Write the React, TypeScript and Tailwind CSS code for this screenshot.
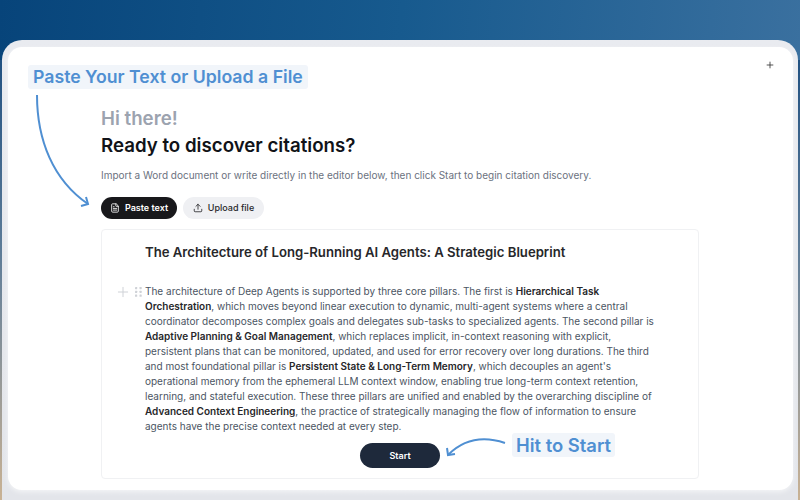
import { FileText, Plus, Upload } from "lucide-react";

function Note({ text, className }: { text: string; className: string }) {
  return (
    <div className={"absolute rounded-[3px] bg-[#f1f5fa] leading-6 font-semibold text-[#4f8fd2] " + className}>
      {text}
    </div>
  );
}

function DragDots() {
  return (
    <svg width="7" height="10" viewBox="0 0 7 10" className="fill-[#cfd2d7]">
      {[0, 4.5].map((x) =>
        [0, 3.8, 7.6].map((y) => <rect key={x + "-" + y} x={x} y={y} width="2.2" height="2.2" rx="0.4" />)
      )}
    </svg>
  );
}

export default function App() {
  return (
    <div className="h-[500px] w-[800px] overflow-hidden bg-gradient-to-b from-[#07447a] via-[#5d7c98] to-[#c9b294] font-['Inter',sans-serif]">
      {/* top band runs behind the rounded corners of the card */}
      <div className="h-[60px] w-full bg-[linear-gradient(95deg,#07447a,#175a8e_50%,#3a709f)]" />
      <div className="relative -mt-[20px] ml-[2px] h-[460px] w-[796px] rounded-t-[20px] bg-gradient-to-b from-[#e9ebf0] to-[#e3e5ea] px-[6px] pt-[7px]">
        <div className="relative h-[443px] w-[785px] rounded-[14px] bg-white pt-[60px] pl-[93px] shadow-[0_2px_5px_rgba(255,255,255,0.6)]">
          <button className="absolute top-[13px] right-[18px] text-[#333]">
            <Plus size={10} strokeWidth={2} />
          </button>

          <Note text="Paste Your Text or Upload a File" className="top-[18px] left-[20px] px-[5px] text-[17.7px]" />
          <svg width="70" height="130" viewBox="0 0 70 130" fill="none" className="absolute top-[48px] left-[20px] stroke-[#4f8fd2]">
            <path d="M9 0 C9 45 25 85 60 109" strokeWidth="2" />
            <path d="M53 111 L60 109 L58 102" strokeWidth="2" />
          </svg>

          <h1 className="text-[18.7px] leading-6 font-semibold text-[#9ca3af]">Hi there!</h1>
          <h2 className="mt-[3px] text-[18.7px] leading-6 font-semibold text-[#111318]">Ready to discover citations?</h2>
          <p className="mt-[9px] text-[10px] leading-4 text-[#6b7280]">
            Import a Word document or write directly in the editor below, then click Start to begin citation discovery.
          </p>

          <div className="mt-[14px] flex gap-[6px]">
            <button className="flex h-[22px] w-[76px] items-center justify-center gap-[5px] rounded-full bg-[#18181b] text-[9px] font-semibold text-white">
              <FileText size={10} />
              Paste text
            </button>
            <button className="flex h-[22px] w-[81px] items-center justify-center gap-[5px] rounded-full bg-[#eff0f3] text-[9px] font-medium text-[#27272a]">
              <Upload size={10} />
              Upload file
            </button>
          </div>

          <div className="mt-[10px] h-[250px] w-[598px] rounded-[4px] border border-[#f0f1f3] pt-[12px] pl-[43px]">
            <h3 className="text-[13.15px] leading-5 font-semibold text-[#27272a]">
              The Architecture of Long-Running AI Agents: A Strategic Blueprint
            </h3>
            <div className="relative mt-[22px]">
              <div className="absolute top-0 -left-[30px] flex items-center gap-[4px]">
                <Plus size={16} strokeWidth={1.5} className="text-[#cfd2d7]" />
                <DragDots />
              </div>
              <p className="text-[10px] leading-[15px] text-[#4b5563]">
                The architecture of Deep Agents is supported by three core pillars. The first is <b className="font-semibold text-[#27272a]">Hierarchical Task</b>
                <br />
                <b className="font-semibold text-[#27272a]">Orchestration</b>, which moves beyond linear execution to dynamic, multi-agent systems where a central
                <br />
                coordinator decomposes complex goals and delegates sub-tasks to specialized agents. The second pillar is
                <br />
                <b className="font-semibold text-[#27272a]">Adaptive Planning &amp; Goal Management</b>, which replaces implicit, in-context reasoning with explicit,
                <br />
                persistent plans that can be monitored, updated, and used for error recovery over long durations. The third
                <br />
                and most foundational pillar is <b className="font-semibold text-[#27272a]">Persistent State &amp; Long-Term Memory</b>, which decouples an agent's
                <br />
                operational memory from the ephemeral LLM context window, enabling true long-term context retention,
                <br />
                learning, and stateful execution. These three pillars are unified and enabled by the overarching discipline of
                <br />
                <b className="font-semibold text-[#27272a]">Advanced Context Engineering</b>, the practice of strategically managing the flow of information to ensure
                <br />
                agents have the precise context needed at every step.
              </p>
            </div>
            <button className="mt-[9px] ml-[215px] h-[25px] w-[80px] rounded-full bg-[#1e293b] text-[9px] font-semibold text-white">
              Start
            </button>
          </div>

          <Note text="Hit to Start" className="top-[386px] left-[504px] px-[4px] text-[18.4px]" />
          <svg width="60" height="24" viewBox="0 0 60 24" fill="none" className="absolute top-[390px] left-[438px] stroke-[#4f8fd2]">
            <path d="M59 6 C38 -1 18 2 2 18" strokeWidth="2" />
            <path d="M1 11 L2 18 L9 17" strokeWidth="2" />
          </svg>
        </div>
      </div>
    </div>
  );
}
